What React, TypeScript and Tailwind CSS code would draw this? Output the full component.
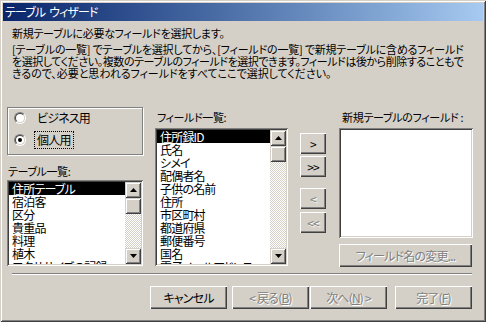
import React from "react";

const FONT = "font-['Noto_Sans_CJK_JP',sans-serif] [font-feature-settings:'palt']";
const raised =
  "bg-[#d4d0c8] shadow-[inset_1px_1px_#ffffff,inset_-1px_-1px_#404040,inset_-2px_-2px_#808080]";
const raisedSb =
  "bg-[#d4d0c8] shadow-[inset_1px_1px_#d4d0c8,inset_-1px_-1px_#404040,inset_2px_2px_#ffffff,inset_-2px_-2px_#808080]";
const sunken =
  "shadow-[inset_1px_1px_#808080,inset_-1px_-1px_#ffffff,inset_2px_2px_#404040,inset_-2px_-2px_#d4d0c8]";
const grayText = "text-[#808080] [text-shadow:1px_1px_0_#ffffff]";

const tables = ["住所テーブル", "宿泊客", "区分", "貴重品", "料理", "植木", "エクササイズの記録"];
const fields = [
  "住所録ID",
  "氏名",
  "シメイ",
  "配偶者名",
  "子供の名前",
  "住所",
  "市区町村",
  "都道府県",
  "郵便番号",
  "国名",
  "電子メールアドレス",
];

function Arrow({ up }: { up?: boolean }) {
  return (
    <div className={`w-4 h-4 flex items-center justify-center ${raisedSb}`}>
      <svg width="7" height="4" viewBox="0 0 7 4">
        {up ? <path d="M3.5 0L7 4H0z" fill="#000" /> : <path d="M0 0h7L3.5 4z" fill="#000" />}
      </svg>
    </div>
  );
}

function ScrollBar() {
  return (
    <div className="flex w-4 flex-col">
      <Arrow up />
      <div className={`h-4 w-4 ${raisedSb}`} />
      <div className="flex-1 bg-[repeating-conic-gradient(#ffffff_0%_25%,#d4d0c8_0%_50%)] bg-[length:2px_2px]" />
      <Arrow />
    </div>
  );
}

function ListBox({ items, className }: { items: string[]; className: string }) {
  return (
    <div className={`flex bg-white p-[2px] ${sunken} ${className}`}>
      <div className="flex-1 overflow-hidden">
        {items.map((t, i) => (
          <div
            key={t}
            className={`h-[13px] leading-[13px] pl-[3px] whitespace-nowrap text-[12px] tracking-[-0.8px] ${
              i === 0 ? "bg-black text-white" : "text-black"
            }`}
          >
            {t}
          </div>
        ))}
      </div>
      <ScrollBar />
    </div>
  );
}

function Btn({
  children,
  disabled,
  className,
}: {
  children: React.ReactNode;
  disabled?: boolean;
  className: string;
}) {
  return (
    <div
      className={`flex items-center justify-center whitespace-nowrap ${raised} ${
        disabled ? grayText : "text-black"
      } ${className}`}
    >
      {children}
    </div>
  );
}

function Radio({ checked }: { checked?: boolean }) {
  return (
    <div className="w-3 h-3 rounded-full border border-t-[#808080] border-l-[#808080] border-b-white border-r-white">
      <div className="w-full h-full rounded-full border border-t-[#404040] border-l-[#404040] border-b-[#d4d0c8] border-r-[#d4d0c8] bg-white flex items-center justify-center">
        {checked && <div className="w-1 h-1 rounded-full bg-black" />}
      </div>
    </div>
  );
}

export default function App() {
  return (
    <div
      className={`w-[486px] h-[322px] bg-[#d4d0c8] p-[3px] flex flex-col text-[12px] tracking-[-0.8px] text-black ${FONT} shadow-[inset_1px_1px_#d4d0c8,inset_-1px_-1px_#404040,inset_2px_2px_#ffffff,inset_-2px_-2px_#808080]`}
    >
      {/* title bar */}
      <div className="h-[18px] flex items-center pl-[2px] bg-linear-to-r from-[#0a246a] to-[#a6caf0] text-white leading-[18px] tracking-[-0.9px]">
        <span>テーブル</span>
        <span className="ml-[4px]">ウィザード</span>
      </div>

      <div className="flex-1 flex flex-col">
        <div className="ml-[9px] mt-[6px] h-[12px] leading-[12px] whitespace-nowrap text-[11px] tracking-[-0.28px]">
          新規テーブルに必要なフィールドを選択します。
        </div>
        <div className="ml-[9px] mt-[4px] leading-[12px] whitespace-nowrap text-[11px]">
          <div className="h-[12px] tracking-[-0.2px]">[テーブルの一覧] でテーブルを選択してから、[フィールドの一覧] で新規テーブルに含めるフィールド</div>
          <div className="h-[12px] tracking-[-0.45px]">を選択してください。複数のテーブルのフィールドを選択できます。フィールドは後から削除することもで</div>
          <div className="h-[12px] tracking-[-0.05px]">きるので、必要と思われるフィールドをすべてここで選択してください。</div>
        </div>

        <div className="mt-[28px] ml-[4px] flex h-[160px]">
          {/* left column */}
          <div className="w-[136px] flex flex-col">
            <div className="h-[48px] border border-[#808080] shadow-[inset_1px_1px_#ffffff,1px_1px_#ffffff] pl-[6px] pt-[4px] flex flex-col">
              <div className="flex items-center h-[12px]">
                <Radio />
                <span className="ml-[11px] leading-[12px]">ビジネス用</span>
              </div>
              <div className="flex items-center h-[12px] mt-[10px]">
                <Radio checked />
                <span className="ml-[9px] px-[2px] py-[2px] leading-[12px] outline outline-1 outline-dotted outline-black">
                  個人用
                </span>
              </div>
            </div>
            <div className="mt-[10px] ml-[1px] h-[12px] leading-[12px] text-[11px] tracking-[-0.4px]">テーブル一覧:</div>
            <ListBox items={tables} className="mt-[3px] h-[86px]" />
          </div>

          {/* middle column */}
          <div className="ml-[12px] w-[133px] flex flex-col">
            <div className="mt-[4px] ml-[2px] h-[12px] leading-[12px] text-[11px] tracking-[-0.4px]">フィールド一覧:</div>
            <ListBox items={fields} className="mt-[5px] h-[138px]" />
          </div>

          {/* move buttons */}
          <div className="ml-[12px] w-[26px] flex flex-col">
            <Btn className="mt-[26px] h-[21px]">&gt;</Btn>
            <Btn className="mt-[2px] h-[21px] tracking-[-1px]">&gt;&gt;</Btn>
            <Btn disabled className="mt-[11px] h-[21px]">&lt;</Btn>
            <Btn disabled className="mt-[3px] h-[21px] tracking-[-1px]">&lt;&lt;</Btn>
          </div>

          {/* right column */}
          <div className="ml-[13px] w-[134px] flex flex-col">
            <div className="mt-[4px] ml-[3px] h-[12px] leading-[12px] whitespace-nowrap text-[11px] tracking-[-0.3px]">新規テーブルのフィールド :</div>
            <div className={`mt-[5px] h-[110px] bg-white ${sunken}`} />
            <Btn disabled className="mt-[6px] h-[23px] w-[133px]">フィールド名の変更...</Btn>
          </div>
        </div>

        <div className="mt-[6px] ml-[9px] w-[460px] h-[2px] border-t border-t-[#808080] border-b border-b-white" />

        <div className="mt-[11px] ml-[147px] flex h-[23px]">
          <Btn className="w-[77px] h-[23px]">キャンセル</Btn>
          <Btn disabled className="ml-[5px] w-[77px] h-[23px]">
            &lt;&nbsp;戻る(<u>B</u>)
          </Btn>
          <Btn disabled className="ml-[1px] w-[77px] h-[23px]">
            次へ(<u>N</u>)&nbsp;&gt;
          </Btn>
          <Btn disabled className="ml-[8px] w-[77px] h-[23px]">
            完了(<u>F</u>)
          </Btn>
        </div>
      </div>
    </div>
  );
}
